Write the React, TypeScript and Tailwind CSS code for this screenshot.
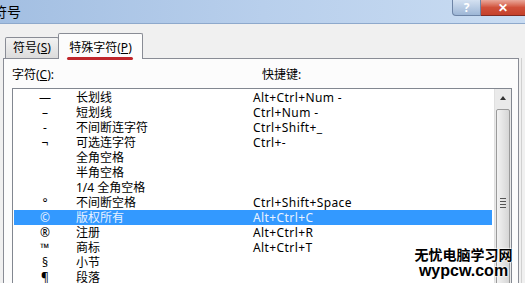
import React from "react";

const rows: [string, string, string][] = [
  ["—", "长划线", "Alt+Ctrl+Num -"],
  ["–", "短划线", "Ctrl+Num -"],
  ["-", "不间断连字符", "Ctrl+Shift+_"],
  ["¬", "可选连字符", "Ctrl+-"],
  ["", "全角空格", ""],
  ["", "半角空格", ""],
  ["", "1/4 全角空格", ""],
  ["°", "不间断空格", "Ctrl+Shift+Space"],
  ["©", "版权所有", "Alt+Ctrl+C"],
  ["®", "注册", "Alt+Ctrl+R"],
  ["™", "商标", "Alt+Ctrl+T"],
  ["§", "小节", ""],
  ["¶", "段落", ""],
];

const font = { fontFamily: '"Noto Sans", "Noto Sans CJK SC", sans-serif' };

export default function App() {
  return (
    <div
      className="relative w-[525px] h-[283px] overflow-hidden bg-[#f0f0f0] text-[12px] text-black"
      style={font}
    >
      {/* title bar */}
      <div className="h-[24px] flex items-start bg-gradient-to-r from-[#a3bfe2] via-[#b8cfec] to-[#c9dcf2] border-b border-[#8ea9cc]">
        <div className="ml-[-7px] mt-[3px] text-[14px] leading-[17px] text-black">符号</div>
        <div className="ml-auto flex h-[16px]">
          <div className="w-[29px] h-[16px] border border-[#6d84a6] border-t-0 rounded-bl-[4px] bg-gradient-to-b from-[#d4e1f1] to-[#9db6d6] flex items-center justify-center text-white text-[12px] font-bold leading-none">?</div>
          <div className="w-[44px] h-[16px] border-b border-[#7e2a22] bg-gradient-to-b from-[#e9a89b] via-[#d0503a] to-[#c5412b] flex items-center justify-center text-white text-[12px] font-bold leading-none">✕</div>
        </div>
      </div>

      {/* tabs */}
      <div className="relative h-[34px]">
        <div className="absolute left-[5px] top-[13px] w-[54px] h-[21px] border border-[#898c95] border-b-0 rounded-t-[2px] bg-gradient-to-b from-[#f2f2f2] to-[#dcdcdc] flex items-center justify-center text-[12px]">
          符号(<span className="underline">S</span>)
        </div>
        <div className="absolute left-[58px] top-[9px] w-[85px] h-[26px] border border-[#898c95] border-b-0 rounded-t-[2px] bg-[#fcfcfc] z-10 flex items-start justify-center pt-[5px] text-[12px]">
          特殊字符(<span className="underline">P</span>)
        </div>
        <div className="absolute left-[67px] top-[33px] w-[66px] h-[3px] rounded-full bg-[#c0262b] z-20" />
      </div>

      {/* panel */}
      <div className="ml-[3px] w-[516px] h-[240px] border border-[#898c95] bg-[#fcfcfc] pt-[9px] pl-[8px]">
        <div className="flex h-[14px] items-center text-[12px]">
          <div className="w-[250px]">字符(<span className="underline">C</span>):</div>
          <div>快捷键:</div>
        </div>
        <div className="mt-[6px] w-[500px] h-[220px] border border-[#828790] bg-white flex">
          <div className="flex-1 pt-[1px] pl-[1px] pr-[2px]">
            {rows.map(([sym, name, key], i) => {
              const sel = i === 8;
              return (
                <div
                  key={i}
                  className={`flex h-[15px] items-center leading-[15px] text-[12px] ${sel ? "bg-[#3399ff] text-[#e8f2ff]" : "text-black"}`}
                >
                  <div className="w-[62px] text-center">{sym}</div>
                  <div className="w-[177px]">{name}</div>
                  <div className="tracking-[0.4px]">{key}</div>
                </div>
              );
            })}
          </div>
          <div className="w-[17px] h-full bg-[#eaeaea] border-l border-[#e0e0e0] flex flex-col items-center">
            <div className="w-[16px] h-[17px] flex items-center justify-center">
              <div className="w-0 h-0 border-l-[3px] border-r-[3px] border-b-[4px] border-l-transparent border-r-transparent border-b-[#333]" />
            </div>
            <div className="mt-[3px] w-[14px] flex-1 border border-[#9a9a9a] rounded-[2px] bg-gradient-to-r from-[#f3f3f3] via-[#e4e4e4] to-[#d6d6d6] flex flex-col items-center">
              <div className="mt-[88px] flex flex-col gap-[2px]">
                <div className="w-[6px] h-[1px] bg-[#555]" />
                <div className="w-[6px] h-[1px] bg-[#555]" />
                <div className="w-[6px] h-[1px] bg-[#555]" />
                <div className="w-[6px] h-[1px] bg-[#555]" />
              </div>
            </div>
          </div>
        </div>
      </div>
      <div className="absolute right-0 top-[58px] w-[4px] h-[225px] border-l border-[#d0d0d0] bg-[#f0f0f0]" />

      {/* watermark */}
      <div
        className="absolute left-[413px] top-[247px] w-[101px] flex flex-col items-center leading-none text-black font-bold"
        style={{ fontFamily: '"Noto Sans CJK SC", sans-serif', textShadow: "0 0 2px #fff, 0 0 2px #fff, 0 0 2px #fff" }}
      >
        <div className="text-[14px] leading-[15px]">无忧电脑学习网</div>
        <div className="text-[16px] leading-[17px]" style={{ fontFamily: '"Liberation Sans", sans-serif' }}>wypcw.com</div>
      </div>
    </div>
  );
}
